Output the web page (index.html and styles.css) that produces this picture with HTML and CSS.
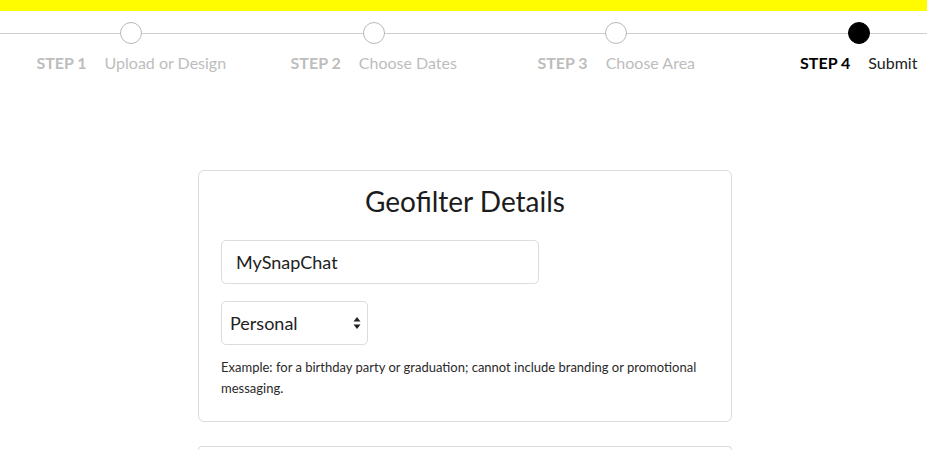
FILE: index.html
```html
<!DOCTYPE html>
<html lang="en">
<head>
<meta charset="utf-8">
<title>Geofilter Details</title>
<link rel="stylesheet" href="styles.css">
</head>
<body>
<div class="topbar"></div>
<div class="page">
  <nav class="stepper">
    <div class="step">
      <span class="dot"></span>
      <div class="label"><b>STEP 1</b><span>Upload or Design</span></div>
    </div>
    <div class="step">
      <span class="dot"></span>
      <div class="label"><b>STEP 2</b><span>Choose Dates</span></div>
    </div>
    <div class="step">
      <span class="dot"></span>
      <div class="label"><b>STEP 3</b><span>Choose Area</span></div>
    </div>
    <div class="step active">
      <span class="dot"></span>
      <div class="label"><b>STEP 4</b><span>Submit</span></div>
    </div>
  </nav>

  <section class="card">
    <h1 class="card-title">Geofilter Details</h1>
    <div class="field text-field">MySnapChat</div>
    <div class="field select-field">
      <span>Personal</span>
      <svg class="arrows" width="8" height="14" viewBox="0 0 8 14"><path d="M4 1 L7.5 5.5 H0.5 Z M4 13 L7.5 8.5 H0.5 Z" fill="#222"/></svg>
    </div>
    <p class="hint">Example: for a birthday party or graduation; cannot include branding or promotional messaging.</p>
  </section>

  <section class="card next"></section>
</div>
</body>
</html>
```

FILE: styles.css
```css
html, body {
  margin: 0;
  padding: 0;
  background: #fff;
  overflow: hidden;
}
body {
  font-family: "Lato", "Noto Sans", sans-serif;
  color: #222;
  height: 450px;
}
.topbar {
  height: 11px;
  background: #fffc00;
}
.page {
  width: 100%;
  box-sizing: border-box;
  padding-left: 3px;
}
.stepper {
  display: flex;
  margin-left: -3px;
  padding: 11px 0 0 10px;
  overflow: hidden;
  background: linear-gradient(#cfcfcf, #cfcfcf) 0 22px / 100% 1px no-repeat;
}
.step {
  width: 242.5px;
  flex: none;
  display: flex;
  flex-direction: column;
  align-items: center;
}
.dot {
  width: 20px;
  height: 20px;
  border: 1px solid #b9b9b9;
  border-radius: 50%;
  background: #fff;
}
.step.active .dot {
  background: #000;
  border-color: #000;
}
.label {
  margin-top: 9px;
  display: flex;
  gap: 18px;
  font-size: 16px;
  line-height: 20px;
  color: #bdbdbd;
  white-space: nowrap;
}
.label b {
  font-weight: 700;
}
.step.active .label {
  color: #000;
}
.step.active .label span {
  color: #222;
}
.card {
  width: 534px;
  box-sizing: border-box;
  margin: 97px auto 0;
  border: 1px solid #dcdcdc;
  border-radius: 6px;
  padding: 14px 22px 22px;
}
.card.next {
  margin-top: 24px;
  height: 4px;
  border-bottom: 0;
  border-radius: 6px 6px 0 0;
  padding: 0;
}
.card-title {
  margin: 0;
  text-align: center;
  font-size: 28px;
  line-height: 1.2;
  font-weight: 400;
  color: #1c1c1c;
}
.field {
  box-sizing: border-box;
  height: 44px;
  border: 1px solid #dcdcdc;
  border-radius: 5px;
  display: flex;
  align-items: center;
  font-size: 18px;
  color: #222;
}
.text-field {
  width: 318px;
  margin-top: 21px;
  padding-left: 14px;
}
.select-field {
  width: 147px;
  margin-top: 17px;
  padding: 0 6px 0 8px;
  justify-content: space-between;
}
.arrows {
  display: block;
}
.hint {
  margin: 12px 0 0;
  font-size: 13px;
  line-height: 21px;
  color: #2a2a2a;
}
```
